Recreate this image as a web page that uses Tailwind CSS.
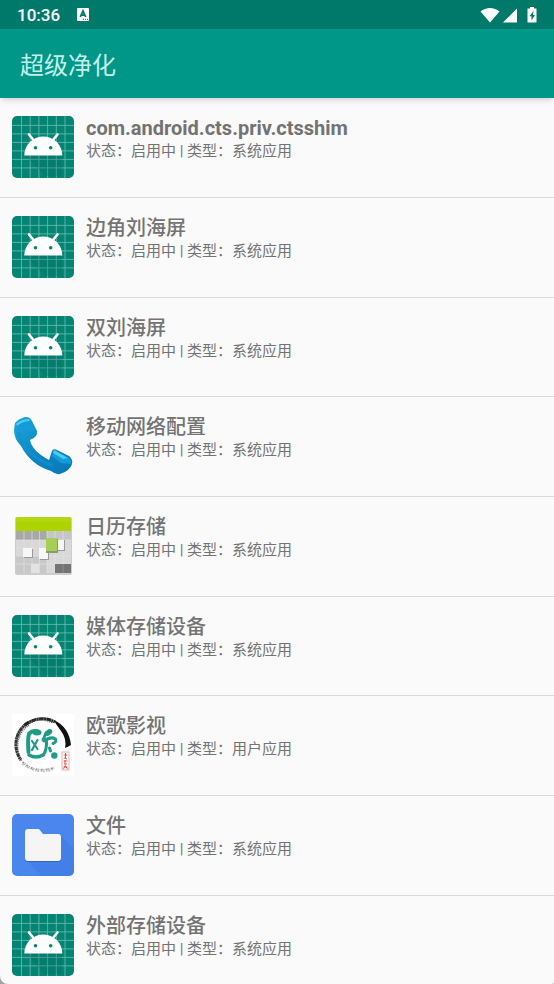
<!DOCTYPE html>
<html lang="zh-CN" class="bg-[#a3a3a3]">
<head>
    <meta charset="UTF-8">
    <meta name="viewport" content="width=device-width, initial-scale=1.0">
    <title>超级净化</title>
    <script src="https://cdn.jsdelivr.net/npm/@tailwindcss/browser@4"></script>
</head>
<body class="bg-[#fafafa] h-screen flex flex-col overflow-hidden rounded-bl-lg rounded-br-xs font-[Roboto,'Noto_Sans_CJK_SC',sans-serif] text-[#737373]">
    <!-- Shared launcher icon -->
    <svg class="hidden" xmlns="http://www.w3.org/2000/svg">
        <symbol id="android" viewBox="0 0 62 62">
            <rect width="62" height="62" rx="5" fill="#048573" />
            <path d="M9.5 0v62M18.2 0v62M26.9 0v62M35.6 0v62M44.3 0v62M53 0v62M0 9.4h62M0 17.9h62M0 26.4h62M0 34.9h62M0 43.4h62M0 51.9h62" stroke="#6fbdb2" stroke-width=".8" />
            <path d="M13 39L33 60h17V39z" fill="#00695c" opacity=".25" />
            <path d="M12.3 39.5a19 19 0 0138 0z" fill="#fff" />
            <path d="M17 18.5l5 6M45.5 18.5l-5 6" stroke="#fff" stroke-width="2.6" stroke-linecap="round" />
            <circle cx="23.5" cy="31.8" r="1.8" fill="#048573" />
            <circle cx="38.7" cy="31.8" r="1.8" fill="#048573" />
        </symbol>
    </svg>
    <header class="shrink-0 bg-[#009688] shadow-md relative">
        <div class="h-[29px] bg-[#00796b] flex items-center justify-between pl-[17px] pr-4 text-white">
            <div class="flex items-center gap-[17px]">
                <span class="text-[17px] leading-5 font-medium">10:36</span>
                <svg class="w-3 h-[13px]" viewBox="0 0 12 13" aria-hidden="true">
                    <rect width="12" height="13" rx="1" fill="#fff" />
                    <path d="M3.3 9L6 3l2.7 6M4.3 7h3.4" fill="none" stroke="#00796b" stroke-width="1.8" />
                    <path d="M6 11.3h1M8 11.3h1M10 11.3h1" stroke="#00796b" />
                </svg>
            </div>
            <div class="flex items-center">
                <svg class="w-5 h-4" viewBox="0 0 20 16" fill="#fff" aria-hidden="true">
                    <path d="M.5 4.5C6-.3 14-.3 19.5 4.5L10 15.5z" />
                </svg>
                <svg class="w-4 h-4 ml-0.5" viewBox="0 0 16 16" fill="#fff" aria-hidden="true">
                    <path d="M1 15.5L15 1.5v14z" />
                </svg>
                <svg class="w-3 h-4 ml-2" viewBox="0 0 12 16" aria-hidden="true">
                    <path d="M4 0h4v1.6h2.5v14h-9v-14H4z" fill="#fff" />
                    <path d="M7.5 4L3.5 9.3h2V13.5L9 8H7z" fill="#00796b" />
                </svg>
            </div>
        </div>
        <div class="h-[69px] flex items-center px-5">
            <h1 class="text-2xl leading-8 font-normal text-[#c4efe8] pt-1">超级净化</h1>
        </div>
    </header>
    <main class="flex-1 min-h-0 overflow-hidden">
        <ul class="[&>li]:h-[100px] [&>li:nth-child(3n)]:h-[99px] [&>li]:flex [&>li]:gap-3 [&>li]:px-3 [&>li]:pt-[18px] [&>li]:border-b [&>li]:border-[#d9d9d9] [&_svg]:size-[62px] [&_svg]:shrink-0 [&_h2]:text-[20px] [&_h2]:leading-6 [&_p]:text-[15px] [&_p]:leading-[22px]">
            <li>
                <svg aria-hidden="true"><use href="#android" /></svg>
                <div>
                    <h2 class="font-bold">com.android.cts.priv.ctsshim</h2>
                    <p>状态：启用中 | 类型：系统应用</p>
                </div>
            </li>
            <li>
                <svg aria-hidden="true"><use href="#android" /></svg>
                <div>
                    <h2 class="font-medium">边角刘海屏</h2>
                    <p>状态：启用中 | 类型：系统应用</p>
                </div>
            </li>
            <li>
                <svg aria-hidden="true"><use href="#android" /></svg>
                <div>
                    <h2 class="font-medium">双刘海屏</h2>
                    <p>状态：启用中 | 类型：系统应用</p>
                </div>
            </li>
            <li>
                <svg viewBox="0 0 62 62" aria-hidden="true">
                    <defs>
                        <linearGradient id="phone" x1="0" y1="0" x2="1" y2="1">
                            <stop offset="0" stop-color="#1fa9dc" />
                            <stop offset=".5" stop-color="#0b86c6" />
                            <stop offset="1" stop-color="#0a78b8" />
                        </linearGradient>
                    </defs>
                    <path d="M3 8Q6 4 13 2Q18 1.5 20 6L25 16Q26 22 18 25Q20 36 37 45L40 36Q41 33 45 35L57 41Q61 44 60 49Q58 56 48 59Q44 60 39 56Q19 50 9 31Q2 24 2 15z" fill="url(#phone)" />
                    <path d="M4 9Q9 3 17 4L22 14Q16 20 5 14z" fill="#159bd5" />
                    <path d="M4 9Q9 4 17 4L18 6Q11 6 5 11z" fill="#4ccbee" />
                    <path d="M42 35l15 8q3 3 2 6L49 48l-9-7z" fill="#159bd5" />
                    <path d="M42 35l14 8-5 1-10-6z" fill="#4ccbee" />
                    <path d="M6 17Q9 31 21 40T41 50" fill="none" stroke="#1592cc" stroke-width="3" opacity=".7" />
                </svg>
                <div>
                    <h2 class="font-medium">移动网络配置</h2>
                    <p>状态：启用中 | 类型：系统应用</p>
                </div>
            </li>
            <li>
                <svg viewBox="0 0 62 62" aria-hidden="true">
                    <rect x="3" y="2" width="57" height="58" rx="2" fill="#ccc" />
                    <rect x="4" y="2" width="55" height="56" rx="2" fill="#d8d8d8" />
                    <path d="M4 16V4q0-2 2-2h51q2 0 2 2v12z" fill="#add303" />
                    <path d="M4 4q0-2 2-2h51q2 0 2 2v3H4z" fill="#b3d70f" />
                    <path d="M4 16h31v9H4z" fill="#a8a8a8" />
                    <path d="M35 16h24v9H35z" fill="#c5c5c5" />
                    <path d="M4 41h31v17H4z" fill="#c8c8c8" />
                    <path d="M12 16v42M20 16v42M27.5 16v42M35 16v42M43 16v42M51 16v42M4 25h55M4 33h55M4 41h55M4 49h55" stroke="#e6e6e6" stroke-width=".6" />
                    <path d="M43 49h16v9H43z" fill="#747474" />
                    <path d="M51 49v9" stroke="#999" stroke-width=".7" />
                    <path d="M19 49h8v9h-8z" fill="#e2e2e2" />
                    <path d="M12 34h9v9h-9zM28 34h9v11h-9zM46 25h7v11h-7z" fill="#9a9a9a" />
                    <path d="M11 33h9v9h-9zM27 33h9v11h-9zM45 25h7v10h-7z" fill="#f7f7f7" />
                    <path d="M34 24h12v14H34z" fill="#8b9a70" />
                    <path d="M34 23h11v13H34z" fill="#a5cf55" />
                </svg>
                <div>
                    <h2 class="font-medium">日历存储</h2>
                    <p>状态：启用中 | 类型：系统应用</p>
                </div>
            </li>
            <li>
                <svg aria-hidden="true"><use href="#android" /></svg>
                <div>
                    <h2 class="font-medium">媒体存储设备</h2>
                    <p>状态：启用中 | 类型：系统应用</p>
                </div>
            </li>
            <li>
                <svg viewBox="0 0 62 62" fill="none" aria-hidden="true">
                    <rect width="62" height="62" fill="#fff" />
                    <path d="M17 8A26 26 0 009 46" stroke="#333" stroke-width="3" stroke-dasharray="2 .4 4 .3" />
                    <path d="M13 11Q28 0 43 8" stroke="#222" stroke-width="3" stroke-dasharray="5 .3 2 .3" />
                    <path d="M17 11A25 25 0 007 40M18 9Q29 3 41 9" stroke="#555" stroke-width="1.5" stroke-dasharray="1 1" />
                    <path d="M9 46Q20 60 42 54" stroke="#999" stroke-width="2" stroke-dasharray="1 1.3 2 .8" />
                    <path d="M10 50Q27 62 42 55" stroke="#bbb" stroke-width="1.5" stroke-dasharray="2 1.6 1 1" />
                    <path d="M42 6Q57 13 59 31Q56 33 53 34Q55 25 49 17L44 10z" fill="#111" />
                    <path d="M26 17.5Q20 16 17 20Q15.5 24 16.5 38" stroke="#209b88" stroke-width="4" stroke-linecap="round" />
                    <path d="M17 41Q24 45 31 41" stroke="#209b88" stroke-width="3.6" stroke-linecap="round" />
                    <ellipse cx="25" cy="18.5" rx="4.5" ry="3" fill="#209b88" />
                    <path d="M20 27l5.5 8M25.5 26L20 36" stroke="#209b88" stroke-width="2.2" stroke-linecap="round" />
                    <ellipse cx="36.5" cy="18.5" rx="4.2" ry="2.8" transform="rotate(-35 36.5 18.5)" fill="#209b88" />
                    <path d="M34 19L31 26M32 27Q39 22 43.5 25Q45 28 41 29.5" stroke="#209b88" stroke-width="3" stroke-linecap="round" />
                    <path d="M34.5 27Q35 35 31.5 41M37.5 34l1 3" stroke="#209b88" stroke-width="3" stroke-linecap="round" />
                    <circle cx="42.3" cy="41.5" r="3.2" fill="#209b88" />
                    <rect x="50" y="38" width="7" height="18" stroke="#e59a9a" stroke-width=".8" />
                    <path d="M51.5 41h4M53.5 39v5M52 44l3 1M51.5 47h4M53 46v4M52 50h3M51.5 53h4M53.5 51l-2 4M53.5 52l2 3" stroke="#c33" stroke-width=".8" />
                </svg>
                <div>
                    <h2 class="font-medium">欧歌影视</h2>
                    <p>状态：启用中 | 类型：用户应用</p>
                </div>
            </li>
            <li>
                <svg viewBox="0 0 62 62" aria-hidden="true">
                    <rect width="62" height="62" rx="5" fill="#4a86ee" />
                    <path d="M14 46l16 16h27q5 0 5-5V34L48 21z" fill="#3d76df" opacity=".4" />
                    <path d="M13 45q0 3 3 3h30q3 0 3-3v-2H13z" fill="#3565c2" />
                    <path d="M13 18q0-3 3-3h11l4 5h15q3 0 3 3v21q0 3-3 3H16q-3 0-3-3z" fill="#f5f5f5" />
                </svg>
                <div>
                    <h2 class="font-medium">文件</h2>
                    <p>状态：启用中 | 类型：系统应用</p>
                </div>
            </li>
            <li>
                <svg aria-hidden="true"><use href="#android" /></svg>
                <div>
                    <h2 class="font-medium">外部存储设备</h2>
                    <p>状态：启用中 | 类型：系统应用</p>
                </div>
            </li>
        </ul>
    </main>
</body>
</html>
